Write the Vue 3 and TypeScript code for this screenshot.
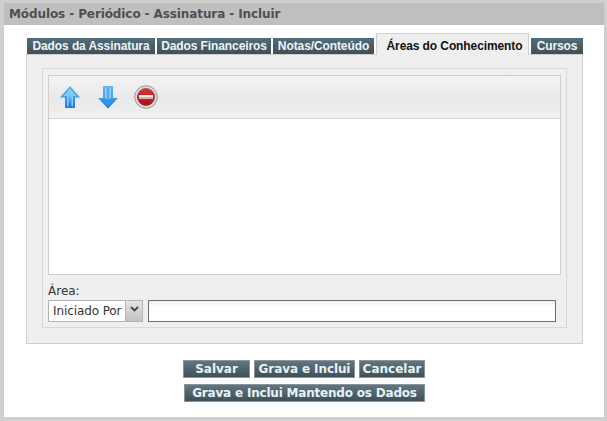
<script setup lang="ts">
const tabs: { label: string; width: number; active?: boolean }[] = [
  { label: 'Dados da Assinatura', width: 128 },
  { label: 'Dados Financeiros', width: 114 },
  { label: 'Notas/Conteúdo', width: 101 },
  { label: 'Áreas do Conhecimento', width: 153, active: true },
  { label: 'Cursos', width: 52 },
]
</script>

<template>
  <div class="page">
    <div class="window">
      <div class="title">Módulos - Periódico - Assinatura - Incluir</div>
      <div class="body">
        <div class="tabs">
          <div
            v-for="t in tabs"
            :key="t.label"
            class="tab"
            :class="{ active: t.active }"
            :style="{ width: t.width + 'px' }"
          >{{ t.label }}</div>
        </div>
        <div class="panel">
          <div class="fieldset">
            <div class="listbox">
              <div class="toolbar">
                <svg class="icon" viewBox="0 0 24 24" width="24" height="24">
                  <defs>
                    <linearGradient id="up" x1="0" y1="0" x2="0" y2="1">
                      <stop offset="0" stop-color="#5fb4ee" />
                      <stop offset="0.55" stop-color="#3c9ce8" />
                      <stop offset="1" stop-color="#1b78e0" />
                    </linearGradient>
                    <linearGradient id="upcore" x1="0" y1="0" x2="0" y2="1">
                      <stop offset="0" stop-color="#7cc8f3" />
                      <stop offset="1" stop-color="#1470dc" />
                    </linearGradient>
                  </defs>
                  <path d="M12 1 L22 12.5 L17 12.5 L17 23 L7 23 L7 12.5 L2 12.5 Z" fill="url(#up)" />
                  <path d="M12 3.5 L18.5 11 L15 11 L15 21.5 L9 21.5 L9 11 L5.5 11 Z" fill="#84cbf3" />
                  <rect x="10.5" y="10" width="3" height="12" fill="url(#upcore)" />
                </svg>
                <svg class="icon" viewBox="0 0 24 24" width="24" height="24">
                  <defs>
                    <linearGradient id="down" x1="0" y1="0" x2="0" y2="1">
                      <stop offset="0" stop-color="#62b6ee" />
                      <stop offset="0.55" stop-color="#3c9ce8" />
                      <stop offset="1" stop-color="#1573de" />
                    </linearGradient>
                  </defs>
                  <path d="M12 23.5 L22 13 L17 13 L17 1 L7 1 L7 13 L2 13 Z" fill="url(#down)" />
                  <rect x="9" y="2.5" width="6" height="11" fill="#8fd1f4" />
                  <rect x="10.5" y="2.5" width="3" height="11" fill="#56adee" />
                  <path d="M12 21 L18.5 14.5 L5.5 14.5 Z" fill="#2f95ec" />
                </svg>
                <svg class="icon" viewBox="0 0 24 24" width="24" height="24">
                  <defs>
                    <linearGradient id="red" x1="0" y1="0" x2="0" y2="1">
                      <stop offset="0" stop-color="#d8383c" />
                      <stop offset="1" stop-color="#ad1015" />
                    </linearGradient>
                  </defs>
                  <circle cx="12" cy="12" r="11.3" fill="#dcdcdc" stroke="#969696" stroke-width="1" />
                  <circle cx="12" cy="12" r="8.6" fill="url(#red)" stroke="#8f1014" stroke-width="0.5" />
                  <rect x="5" y="10" width="14" height="4" rx="0.5" fill="#f3e6e6" />
                  <rect x="5" y="12" width="14" height="2" fill="#c9b6b6" />
                </svg>
              </div>
              <div class="list"></div>
            </div>
            <div class="label">Área:</div>
            <div class="filter">
              <div class="select">
                <span class="select-text">Iniciado Por</span>
                <span class="select-btn">
                  <svg viewBox="0 0 9 6" width="9" height="6">
                    <path d="M1 1 L4.5 4.5 L8 1" fill="none" stroke="#444" stroke-width="1.8" />
                  </svg>
                </span>
              </div>
              <div class="input"></div>
            </div>
          </div>
        </div>
        <div class="actions">
          <div class="row">
            <button class="btn save">Salvar</button>
            <button class="btn add">Grava e Inclui</button>
            <button class="btn cancel">Cancelar</button>
          </div>
          <div class="row">
            <button class="btn keep">Grava e Inclui Mantendo os Dados</button>
          </div>
        </div>
      </div>
    </div>
  </div>
</template>

<style>
html, body { margin: 0; background: #cfcfcf; }
</style>

<style scoped>
.page {
  width: 607px;
  height: 421px;
  box-sizing: border-box;
  padding: 3px 3px 4px 4px;
  background: #cfcfcf;
  overflow: hidden;
}
.window {
  height: 100%;
  background: #fff;
  display: flex;
  flex-direction: column;
}
.title {
  height: 22px;
  background: #bfbfbf;
  color: #4f4f4f;
  font: bold 12px/22px "DejaVu Sans", sans-serif;
  letter-spacing: -0.1px;
  padding-left: 5px;
}
.body {
  padding: 8px 20px 0 22px;
}
.tabs {
  display: flex;
  align-items: flex-end;
  gap: 2px;
  height: 21px;
  padding-left: 1px;
  position: relative;
  z-index: 1;
}
.tab {
  box-sizing: border-box;
  height: 16px;
  background: linear-gradient(#506e79, #414f56);
  color: #eef6fa;
  font: bold 12px/16px "Liberation Sans", sans-serif;
  letter-spacing: -0.1px;
  text-align: center;
  white-space: nowrap;
}
.tab.active {
  height: 22px;
  margin-bottom: -1px;
  background: #efefef;
  color: #111;
  border: 1px solid #d0d0d0;
  border-bottom: 0;
  line-height: 24px;
  padding-left: 4px;
}
.panel {
  box-sizing: border-box;
  width: 557px;
  height: 290px;
  background: #efefef;
  border: 1px solid #cfcfcf;
  padding: 13px 15px 16px;
}
.fieldset {
  box-sizing: border-box;
  height: 260px;
  border: 1px solid #d8d8d8;
  padding: 6px 5px 0;
}
.listbox {
  box-sizing: border-box;
  height: 200px;
  border: 1px solid #cfcfcf;
  display: flex;
  flex-direction: column;
}
.toolbar {
  height: 43px;
  flex: none;
  box-sizing: border-box;
  border-bottom: 1px solid #d0d0d0;
  background: linear-gradient(#f3f3f3, #e9e9e9 55%, #f1f1f1);
  display: flex;
  align-items: center;
  gap: 14px;
  padding-left: 9px;
}
.icon { display: block; }
.list { flex: 1; background: #fff; }
.label {
  margin-top: 8px;
  height: 16px;
  font: 12px/16px "DejaVu Sans", sans-serif;
  color: #333;
}
.filter {
  display: flex;
  gap: 5px;
  margin-top: 1px;
}
.select {
  box-sizing: border-box;
  width: 95px;
  height: 22px;
  border: 1px solid #b4b4b4;
  background: #fff;
  display: flex;
}
.select-text {
  flex: 1;
  font: 12px/20px "DejaVu Sans", sans-serif;
  letter-spacing: -0.1px;
  color: #333;
  padding-left: 4px;
  white-space: nowrap;
}
.select-btn {
  width: 17px;
  flex: none;
  background: linear-gradient(#e4e4e4, #c2c2c2);
  border-left: 1px solid #b4b4b4;
  display: flex;
  justify-content: center;
  padding-top: 5px;
  box-sizing: border-box;
}
.select-btn svg { display: block; }
.input {
  box-sizing: border-box;
  width: 408px;
  height: 22px;
  border: 1px solid #6e6e6e;
  background: linear-gradient(#f0f0f0, #fff 30%);
}
.actions {
  margin-top: 16px;
  display: flex;
  flex-direction: column;
  gap: 6px;
}
.row {
  display: flex;
  justify-content: flex-start;
  gap: 4px;
  padding-left: 157px;
}
.btn {
  box-sizing: border-box;
  height: 18px;
  padding: 0;
  border: 1px solid #8b9499;
  background: linear-gradient(#5f7781, #3f5058);
  color: #eaf2f5;
  font: bold 12px/16px "DejaVu Sans", sans-serif;
  text-align: center;
  white-space: nowrap;
}
.save { width: 67px; }
.add { width: 101px; letter-spacing: -0.1px; }
.cancel { width: 66px; }
.keep { width: 241px; margin-left: 1px; letter-spacing: -0.2px; }
</style>
